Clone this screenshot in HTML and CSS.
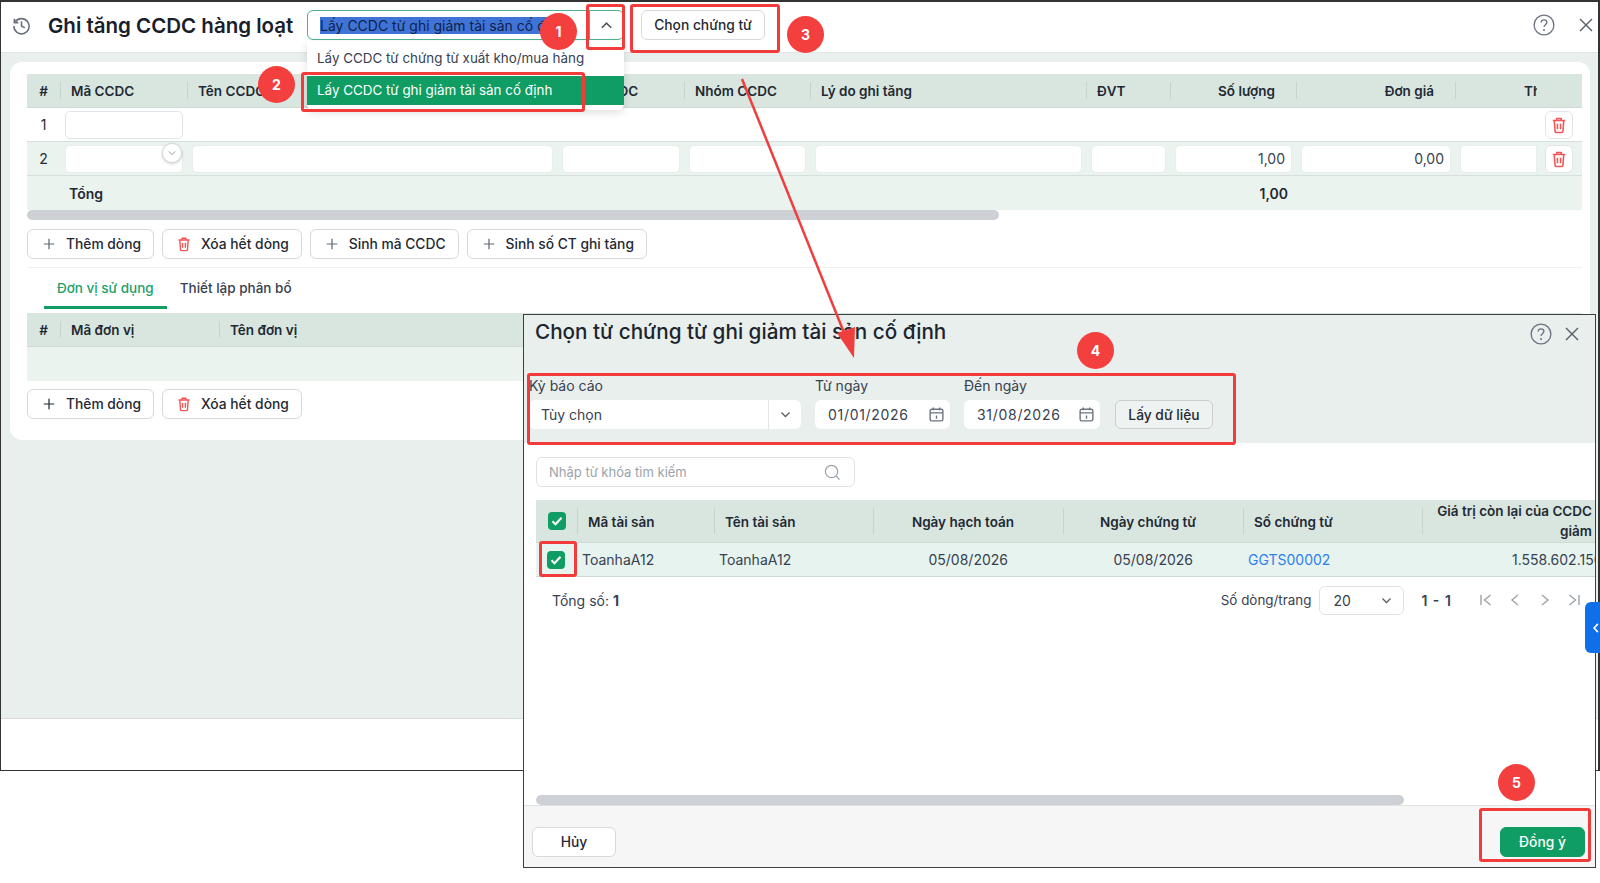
FILE: index.html
```html
<!DOCTYPE html>
<html lang="vi">
<head>
    <meta charset="UTF-8">
    <meta name="viewport" content="width=device-width, initial-scale=1.0">
    <title>Ghi tăng CCDC hàng loạt</title>
    <link rel="stylesheet" href="styles.css">
</head>
<body>

<svg class="icon-defs" width="0" height="0">
    <symbol id="i-plus" viewBox="0 0 16 16"><path d="M8 2v12M2 8h12" fill="none" stroke="currentColor" stroke-width="1.4"/></symbol>
    <symbol id="i-trash" viewBox="0 0 16 16"><path d="M2.5 4h11M6 4V2.2h4V4M3.8 4l.7 9.6c0 .6.5 1 1 1h5c.5 0 1-.4 1-1l.7-9.6M6.6 6.8v5M9.4 6.8v5" fill="none" stroke="currentColor" stroke-width="1.4" stroke-linejoin="round"/></symbol>
    <symbol id="i-cal" viewBox="0 0 16 16"><path d="M3.5 3h9c.8 0 1.5.7 1.5 1.5v8c0 .8-.7 1.5-1.5 1.5h-9C2.700 14 2 13.300 2 12.500v-8C2 3.700 2.700 3 3.500 3zM2 6.500h12M5 1.500V4M11 1.500V4M8 9v3" fill="none" stroke="currentColor" stroke-width="1.300"/></symbol>
    <symbol id="i-down" viewBox="0 0 16 16"><path d="M3 5.500l5 5 5-5" fill="none" stroke="currentColor" stroke-width="1.500"/></symbol>
    <symbol id="i-help" viewBox="0 0 20 20"><circle cx="10" cy="10" r="9" fill="none" stroke="currentColor" stroke-width="1.200"/><path d="M7.400 7.800c0-1.500 1.100-2.500 2.600-2.500s2.600 1 2.600 2.300c0 2-2.600 2.200-2.600 4.200" fill="none" stroke="currentColor" stroke-width="1.200"/><circle cx="10" cy="14.600" r=".9" fill="currentColor"/></symbol>
    <symbol id="i-close" viewBox="0 0 14 14"><path d="M1 1l12 12M13 1L1 13" fill="none" stroke="currentColor" stroke-width="1.400"/></symbol>
    <symbol id="i-check" viewBox="0 0 18 18"><rect width="18" height="18" rx="4" fill="#0f9d63"/><path d="M4.500 9.300l3 3 6-6.500" fill="none" stroke="#fff" stroke-width="2"/></symbol>
</svg>

<div class="window">
    <div class="top-bar">
        <svg class="history-icon" viewBox="0 0 20 20"><path d="M3.200 6.500A8 8 0 1 1 2 10.500M2.500 2.800v4.200h4.200M10 5.500V10.500l3.500 2" fill="none" stroke="currentColor" stroke-width="1.700"/></svg>
        <h1 class="page-title">Ghi tăng CCDC hàng loạt</h1>
        <div class="source-select">
            <div class="source-value"><span class="selected-text">Lấy CCDC từ ghi giảm tài sản cố định</span></div>
            <div class="source-arrow"><svg class="chev-up" viewBox="0 0 16 16"><path d="M3 10.500l5-5 5 5" fill="none" stroke="currentColor" stroke-width="1.600"/></svg></div>
        </div>
        <button class="btn btn-pick">Chọn chứng từ</button>
        <div class="top-actions">
            <svg class="help-icon"><use href="#i-help"/></svg>
            <svg class="close-icon"><use href="#i-close"/></svg>
        </div>
    </div>

    <div class="content">
        <div class="card">
            <div class="grid main-grid grid-head">
                <div class="th">#</div>
                <div class="th">Mã CCDC</div>
                <div class="th">Tên CCDC</div>
                <div class="th">Loại CCDC</div>
                <div class="th">Nhóm CCDC</div>
                <div class="th">Lý do ghi tăng</div>
                <div class="th">ĐVT</div>
                <div class="th th-right">Số lượng</div>
                <div class="th th-right">Đơn giá</div>
                <div class="th th-clip">Thành tiền</div>
                <div class="th th-kebab"></div>
            </div>
            <div class="grid main-grid row">
                <div class="td td-no">1</div>
                <div class="td"><div class="input"></div></div>
                <div class="td"></div><div class="td"></div><div class="td"></div><div class="td"></div>
                <div class="td"></div><div class="td"></div><div class="td"></div><div class="td"></div>
                <div class="td td-del"><div class="del-btn"><svg class="trash"><use href="#i-trash"/></svg></div></div>
            </div>
            <div class="grid main-grid row row-alt">
                <div class="td td-no">2</div>
                <div class="td"><div class="input input-plain"></div></div>
                <div class="td"><div class="input input-plain"></div></div>
                <div class="td"><div class="input input-plain"></div></div>
                <div class="td"><div class="input input-plain"></div></div>
                <div class="td"><div class="input input-plain"></div></div>
                <div class="td"><div class="input input-plain"></div></div>
                <div class="td"><div class="input input-plain input-num">1,00</div></div>
                <div class="td"><div class="input input-plain input-num">0,00</div></div>
                <div class="td"><div class="input input-plain input-cut"></div></div>
                <div class="td td-del"><div class="del-btn"><svg class="trash"><use href="#i-trash"/></svg></div></div>
            </div>
            <div class="grid main-grid row-total">
                <div></div>
                <div class="total-label">Tổng</div>
                <div></div><div></div><div></div><div></div><div></div>
                <div class="total-num">1,00</div>
            </div>
            <div class="scroll-track"><div class="scroll-thumb"></div></div>

            <div class="btn-row">
                <button class="btn btn-tool"><svg class="ico ico-muted"><use href="#i-plus"/></svg>Thêm dòng</button>
                <button class="btn btn-tool"><svg class="ico ico-red"><use href="#i-trash"/></svg>Xóa hết dòng</button>
                <button class="btn btn-tool"><svg class="ico ico-muted"><use href="#i-plus"/></svg>Sinh mã CCDC</button>
                <button class="btn btn-tool"><svg class="ico ico-muted"><use href="#i-plus"/></svg>Sinh số CT ghi tăng</button>
            </div>

            <div class="tabs">
                <div class="tab tab-active">Đơn vị sử dụng</div>
                <div class="tab">Thiết lập phân bổ</div>
            </div>
            <div class="grid unit-grid grid-head">
                <div class="th">#</div>
                <div class="th">Mã đơn vị</div>
                <div class="th">Tên đơn vị</div>
            </div>
            <div class="unit-empty"></div>
            <div class="btn-row btn-row-sub">
                <button class="btn btn-tool"><svg class="ico"><use href="#i-plus"/></svg>Thêm dòng</button>
                <button class="btn btn-tool"><svg class="ico ico-red"><use href="#i-trash"/></svg>Xóa hết dòng</button>
            </div>
        </div>
    </div>
    <div class="window-foot"></div>
</div>

<!-- dropdown mo ra tu o chon nguon -->
<div class="source-menu">
    <div class="menu-item">Lấy CCDC từ chứng từ xuất kho/mua hàng</div>
    <div class="menu-item menu-item-on">Lấy CCDC từ ghi giảm tài sản cố định</div>
</div>
<div class="cell-chevron"><svg class="ico-tiny"><use href="#i-down"/></svg></div>

<div class="modal">
    <div class="modal-head">
        <div class="modal-title-row">
            <h2 class="modal-title">Chọn từ chứng từ ghi giảm tài sản cố định</h2>
            <div class="modal-actions">
                <svg class="help-icon"><use href="#i-help"/></svg>
                <svg class="close-icon"><use href="#i-close"/></svg>
            </div>
        </div>
        <div class="filter-row">
            <div class="field field-period">
                <label>Kỳ báo cáo</label>
                <div class="control control-select"><span>Tùy chọn</span><div class="select-arrow"><svg class="ico-small"><use href="#i-down"/></svg></div></div>
            </div>
            <div class="field field-from">
                <label>Từ ngày</label>
                <div class="control control-date"><span>01/01/2026</span><svg class="cal"><use href="#i-cal"/></svg></div>
            </div>
            <div class="field field-to">
                <label>Đến ngày</label>
                <div class="control control-date"><span>31/08/2026</span><svg class="cal"><use href="#i-cal"/></svg></div>
            </div>
            <button class="btn btn-fetch">Lấy dữ liệu</button>
        </div>
    </div>

    <div class="modal-body">
        <div class="search-box">
            <span>Nhập từ khóa tìm kiếm</span>
            <svg class="search-icon" viewBox="0 0 18 18"><circle cx="8" cy="8" r="6.500" fill="none" stroke="currentColor" stroke-width="1.300"/><path d="M13 13l3.500 3.500" fill="none" stroke="currentColor" stroke-width="1.300"/></svg>
        </div>
        <div class="grid voucher-grid grid-head voucher-head">
            <div class="th th-check"><svg class="check"><use href="#i-check"/></svg></div>
            <div class="th">Mã tài sản</div>
            <div class="th">Tên tài sản</div>
            <div class="th th-date1">Ngày hạch toán</div>
            <div class="th th-date2">Ngày chứng từ</div>
            <div class="th">Số chứng từ</div>
            <div class="th th-value">Giá trị còn lại của CCDC giảm</div>
        </div>
        <div class="grid voucher-grid voucher-row">
            <div class="vd vd-check"><svg class="check"><use href="#i-check"/></svg></div>
            <div class="vd">ToanhaA12</div>
            <div class="vd">ToanhaA12</div>
            <div class="vd vd-date1">05/08/2026</div>
            <div class="vd vd-date2">05/08/2026</div>
            <div class="vd vd-link">GGTS00002</div>
            <div class="vd vd-value">1.558.602.150</div>
        </div>
        <div class="pager">
            <div class="pager-total">Tổng số: <b>1</b></div>
            <div class="pager-right">
                <span class="page-label">Số dòng/trang</span>
                <div class="page-size"><span>20</span><svg class="ico-small"><use href="#i-down"/></svg></div>
                <b class="page-range">1 - 1</b>
                <svg class="nav-icon" viewBox="0 0 14 14"><path d="M2 2v10M11.500 2l-6 5 6 5" fill="none" stroke="currentColor" stroke-width="1.400"/></svg>
                <svg class="nav-icon" viewBox="0 0 14 14"><path d="M10 2L4 7l6 5" fill="none" stroke="currentColor" stroke-width="1.400"/></svg>
                <svg class="nav-icon" viewBox="0 0 14 14"><path d="M4 2l6 5-6 5" fill="none" stroke="currentColor" stroke-width="1.400"/></svg>
                <svg class="nav-icon" viewBox="0 0 14 14"><path d="M12 2v10M2.500 2l6 5-6 5" fill="none" stroke="currentColor" stroke-width="1.400"/></svg>
            </div>
        </div>
        <div class="modal-scroll"><div class="modal-scroll-thumb"></div></div>
    </div>

    <div class="modal-foot">
        <button class="btn btn-cancel">Hủy</button>
        <button class="btn btn-ok">Đồng ý</button>
    </div>
</div>

<div class="side-tab"><svg class="side-chev" viewBox="0 0 8 14"><path d="M6.500 1.500L1.500 7l5 5.500" fill="none" stroke="currentColor" stroke-width="2.200"/></svg></div>

<!-- chu thich mau do ve len anh -->
<svg class="arrow-layer" viewBox="0 0 1600 883">
    <path d="M742 79L849 345" fill="none" stroke="#ef3e3e" stroke-width="2.500"/>
    <path d="M854 358L837 333L855 327Z" fill="#ef3e3e"/>
</svg>
<div class="mark mark-1"></div>
<div class="mark mark-2"></div>
<div class="mark mark-3"></div>
<div class="mark mark-4"></div>
<div class="mark mark-check"></div>
<div class="mark mark-5"></div>
<div class="badge badge-1">1</div>
<div class="badge badge-2">2</div>
<div class="badge badge-3">3</div>
<div class="badge badge-4">4</div>
<div class="badge badge-5">5</div>

</body>
</html>
```

FILE: styles.css
```css
* {
    box-sizing: border-box;
}
body {
    margin: 0;
    height: 883px;
    overflow: hidden;
    position: relative;
    background-color: #fff;
    color: #1f2933;
    font-family: Inter, "Noto Sans", sans-serif;
    font-size: 14px;
}
h1, h2 {
    margin: 0;
}
button {
    font-family: inherit;
}
.icon-defs {
    position: absolute;
}

/* cua so phia sau */
.window {
    height: 771px;
    display: flex;
    flex-direction: column;
    border: 1px solid #333;
    border-top-width: 2px;
    border-right-width: 2px;
    background-color: #e9efec;
}
.top-bar {
    height: 51px;
    flex: none;
    display: flex;
    align-items: center;
    padding: 0 5px 4px 11px;
    background-color: #fff;
    border-bottom: 1px solid #dfe6e3;
}
.history-icon {
    width: 19px;
    height: 19px;
    color: #6b7280;
    flex: none;
}
.page-title {
    margin-left: 17px;
    width: 259px;
    flex: none;
    font-size: 20.5px;
    font-weight: 600;
    white-space: nowrap;
    color: #17202b;
}
.source-select {
    width: 317px;
    height: 30px;
    display: flex;
    border: 1px solid #4db38f;
    border-radius: 6px;
    overflow: hidden;
}
.source-value {
    flex: 1;
    padding-left: 12px;
    line-height: 29px;
    font-size: 14px;
    white-space: nowrap;
    overflow: hidden;
}
.selected-text {
    background-color: #3f74d6;
    color: #10214a;
}
.source-arrow {
    width: 34px;
    display: flex;
    align-items: center;
    justify-content: center;
    border-left: 1px solid #4db38f;
    color: #555;
}
.chev-up {
    width: 15px;
    height: 15px;
}
.btn {
    display: inline-flex;
    align-items: center;
    justify-content: center;
    height: 30px;
    padding: 0;
    border: 1px solid #d6dadd;
    border-radius: 6px;
    background-color: #fff;
    color: #1f2933;
    font-size: 13.8px;
    font-weight: 500;
    white-space: nowrap;
}
.btn-pick {
    margin-left: 17px;
    width: 124px;
}
.top-actions {
    margin-left: auto;
    display: flex;
    align-items: center;
    gap: 24px;
}
.help-icon {
    width: 22px;
    height: 22px;
    color: #6b7280;
}
.close-icon {
    width: 14px;
    height: 14px;
    color: #555d66;
}
.content {
    flex: 1;
    padding: 9px 8px 0 9px;
}
.card {
    height: 378px;
    padding: 12px 8px 0 17px;
    background-color: #fff;
    border-radius: 12px;
}
.window-foot {
    height: 52px;
    flex: none;
    background-color: #fff;
    border-top: 1px solid #d5d9dc;
}

/* bang */
.grid {
    display: grid;
}
.main-grid {
    grid-template-columns: 33px 127px 370px 127px 126px 276px 84px 126px 159px 85px 42px;
}
.unit-grid {
    grid-template-columns: 33px 159px 1fr;
}
.voucher-grid {
    grid-template-columns: 41px 137px 159px 190px 180px 179px 173px;
}
.grid-head {
    height: 34px;
    background-color: #d9e6e0;
    border-bottom: 1px solid #cfdad5;
}
.th {
    position: relative;
    display: flex;
    align-items: center;
    padding: 1px 11px 0;
    font-size: 13.5px;
    font-weight: 600;
    color: #1f2933;
    white-space: nowrap;
}
.th + .th::before {
    content: "";
    position: absolute;
    left: 0;
    top: 8px;
    bottom: 8px;
    width: 1px;
    background-color: #c6d2cd;
}
.th:first-child {
    justify-content: center;
    padding: 0;
}
.th-right {
    justify-content: flex-end;
    padding-right: 21px;
}
.th-clip {
    padding: 0 0 0 69px;
    margin-right: 3px;
    overflow: hidden;
}
.th-kebab::before {
    display: none;
}
.row {
    height: 34px;
    border-bottom: 1px solid #d5dfdb;
}
.row-alt {
    background-color: #ebf3ef;
}
.td {
    padding: 3px 4px 3px 5px;
}
.td-no {
    padding: 0;
    line-height: 33px;
    text-align: center;
}
.td-del {
    padding: 3px 9px 3px 5px;
}
.input {
    height: 28px;
    background-color: #fff;
    border: 1px solid #dfe4e6;
    border-radius: 5px;
    line-height: 26px;
}
.input-plain {
    border-color: #e8eeeb;
}
.input-num {
    padding-right: 6px;
    text-align: right;
    color: #374151;
}
.input-cut {
    margin-right: -1px;
    border-radius: 5px 0 0 5px;
}
.del-btn {
    width: 28px;
    height: 28px;
    display: flex;
    align-items: center;
    justify-content: center;
    background-color: #fff;
    border: 1px solid #e3e6e8;
    border-radius: 6px;
}
.trash {
    width: 18px;
    height: 18px;
    color: #f25555;
}
.row-total {
    height: 34px;
    align-items: center;
    background-color: #ebf3ef;
    font-weight: 600;
}
.total-label {
    padding-left: 9px;
}
.total-num {
    padding-right: 8px;
    text-align: right;
}
.scroll-track {
    height: 10px;
}
.scroll-thumb {
    width: 972px;
    height: 10px;
    background-color: #cdd1d6;
    border-radius: 5px;
}
.btn-row {
    display: flex;
    gap: 8px;
    margin-top: 9px;
}
.btn-row-sub {
    margin-top: 8px;
}
.btn-tool {
    padding: 0 12px 0 14px;
    gap: 10px;
}
.ico {
    width: 14px;
    height: 14px;
    color: #1f2933;
}
.ico-muted {
    color: #5f6872;
}
.ico-red {
    width: 16px;
    height: 16px;
    margin: 0 -1px;
    color: #f25555;
}
.tabs {
    display: flex;
    height: 46px;
    margin-top: 8px;
    padding-left: 17px;
    border-top: 1px solid #eef1f0;
}
.tab {
    height: 41px;
    padding: 0 13px;
    line-height: 40px;
    font-size: 13.5px;
    font-weight: 500;
    color: #374151;
}
.tab-active {
    color: #22a06b;
    border-bottom: 3px solid #0f9d63;
}
.unit-empty {
    height: 34px;
    background-color: #ebf3ef;
}

/* dropdown */
.source-menu {
    position: absolute;
    left: 307px;
    top: 41px;
    width: 317px;
    height: 69px;
    background-color: #fff;
    border-radius: 0 0 6px 6px;
    box-shadow: 0 3px 8px rgba(0, 0, 0, 0.12);
}
.menu-item {
    height: 35px;
    padding-left: 10px;
    line-height: 35px;
    font-size: 13.4px;
    color: #374151;
}
.menu-item-on {
    height: 29px;
    line-height: 28px;
    background-color: #0f9d63;
    color: #fff;
}
.cell-chevron {
    position: absolute;
    left: 162px;
    top: 143px;
    width: 20px;
    height: 20px;
    display: flex;
    align-items: center;
    justify-content: center;
    background-color: #fff;
    border: 1px solid #d5d9dc;
    border-radius: 50%;
    color: #8a939b;
    box-shadow: 0 1px 3px rgba(0, 0, 0, 0.2);
}
.ico-tiny {
    width: 10px;
    height: 10px;
}

/* hop thoai */
.modal {
    position: absolute;
    left: 523px;
    top: 314px;
    width: 1073px;
    height: 554px;
    display: flex;
    flex-direction: column;
    background-color: #fff;
    border: 1px solid #3c3f42;
    overflow: hidden;
}
.modal-head {
    height: 128px;
    flex: none;
    padding: 0 0 0 5px;
    background-color: #e9efec;
}
.modal-title-row {
    height: 60px;
    display: flex;
    padding: 4px 16px 0 6px;
}
.modal-title {
    font-size: 20.7px;
    font-weight: 500;
    color: #1c252e;
    white-space: nowrap;
}
.modal-actions {
    margin-left: auto;
    display: flex;
    align-items: center;
    gap: 13px;
    height: 26px;
    margin-top: 2px;
}
.filter-row {
    display: flex;
    align-items: flex-end;
}
.field label {
    display: block;
    margin-bottom: 3px;
    line-height: 22px;
    color: #374151;
    white-space: nowrap;
}
.field-period {
    width: 272px;
}
.field-from {
    width: 135px;
    margin-left: 14px;
}
.field-to {
    width: 136px;
    margin-left: 14px;
}
.control {
    height: 29px;
    display: flex;
    align-items: center;
    background-color: #fff;
    border-radius: 6px;
    color: #374151;
}
.control-select {
    padding-left: 12px;
    justify-content: space-between;
}
.select-arrow {
    width: 33px;
    height: 100%;
    display: flex;
    align-items: center;
    justify-content: center;
    border-left: 1px solid #dfe4e6;
}
.ico-small {
    width: 13px;
    height: 13px;
    color: #555d66;
}
.control-date {
    padding: 0 5px 0 13px;
    justify-content: space-between;
    letter-spacing: 0.7px;
}
.cal {
    width: 17px;
    height: 17px;
    color: #6b7280;
}
.btn-fetch {
    width: 98px;
    height: 29px;
    margin-left: 15px;
    background-color: #eef2f0;
    border-color: #c9cfcc;
}
.modal-body {
    flex: 1;
    min-height: 0;
    display: flex;
    flex-direction: column;
    padding: 14px 0 0 12px;
}
.search-box {
    width: 319px;
    height: 30px;
    flex: none;
    display: flex;
    align-items: center;
    justify-content: space-between;
    padding: 0 13px 0 12px;
    border: 1px solid #dfe3e5;
    border-radius: 6px;
    font-size: 13px;
    color: #9aa3ab;
}
.search-icon {
    width: 17px;
    height: 17px;
    color: #9aa3ab;
}
.voucher-head {
    height: 43px;
    flex: none;
    margin-top: 13px;
}
.th-check {
    padding: 0;
}
.check {
    width: 18px;
    height: 18px;
}
.th-date1 {
    justify-content: flex-end;
    padding-right: 49px;
}
.th-date2 {
    justify-content: flex-end;
    padding-right: 47px;
}
.th-value {
    padding: 0 3px 0 0;
    justify-content: flex-end;
    text-align: right;
    white-space: normal;
    line-height: 20px;
}
.voucher-row {
    height: 34px;
    flex: none;
    align-items: center;
    background-color: #e6f3ee;
    border-bottom: 1px solid #cfdad5;
    color: #374151;
}
.vd {
    padding-left: 5px;
    white-space: nowrap;
    overflow: hidden;
}
.vd-check {
    padding-left: 11px;
    height: 18px;
}
.vd-date1 {
    padding-right: 55px;
    text-align: right;
}
.vd-date2 {
    padding-right: 50px;
    text-align: right;
}
.vd-link {
    color: #2f80ed;
}
.vd-value {
    padding-left: 90px;
}
.pager {
    height: 30px;
    flex: none;
    margin-top: 8px;
    display: flex;
    align-items: center;
    justify-content: space-between;
    padding: 0 14px 0 16px;
    color: #374151;
}
.pager-right {
    display: flex;
    align-items: center;
}
.page-label {
    font-size: 13.4px;
}
.page-size {
    width: 85px;
    height: 29px;
    margin-left: 8px;
    padding: 0 10px 0 13px;
    display: flex;
    align-items: center;
    justify-content: space-between;
    border: 1px solid #dfe3e5;
    border-radius: 6px;
}
.page-range {
    margin: 0 28px 0 17px;
    font-weight: 600;
    word-spacing: 2px;
}
.nav-icon {
    width: 14px;
    height: 14px;
    margin-left: 15.400px;
    color: #9aa3ab;
}
.page-range + .nav-icon {
    margin-left: 0;
}
.modal-scroll {
    margin-top: auto;
    height: 10px;
    flex: none;
}
.modal-scroll-thumb {
    width: 868px;
    height: 10px;
    background-color: #cdd1d6;
    border-radius: 5px;
}
.modal-foot {
    height: 62px;
    flex: none;
    display: flex;
    justify-content: space-between;
    padding: 21px 10px 0 8px;
    background-color: #f6f6f6;
    border-top: 1px solid #dfe2e4;
}
.btn-cancel {
    width: 84px;
}
.btn-ok {
    width: 85px;
    background-color: #0f9d63;
    border-color: #0f9d63;
    color: #fff;
}
.side-tab {
    position: absolute;
    left: 1585px;
    top: 602px;
    width: 15px;
    height: 51px;
    display: flex;
    align-items: center;
    justify-content: flex-end;
    padding-right: 1px;
    background-color: #0f6fe8;
    border-radius: 6px 0 0 6px;
    color: #fff;
}
.side-chev {
    width: 6px;
    height: 12px;
}

/* chu thich */
.arrow-layer {
    position: absolute;
    left: 0;
    top: 0;
    width: 1600px;
    height: 883px;
}
.mark {
    position: absolute;
    border: 3px solid #f23c3c;
    border-radius: 3px;
}
.mark-1 { left: 586px; top: 4px; width: 39px; height: 46px; }
.mark-2 { left: 301px; top: 72px; width: 284px; height: 40px; }
.mark-3 { left: 630px; top: 4px; width: 150px; height: 49px; }
.mark-4 { left: 527px; top: 373px; width: 709px; height: 72px; }
.mark-check { left: 539px; top: 541px; width: 38px; height: 36px; }
.mark-5 { left: 1479px; top: 808px; width: 112px; height: 54px; }
.badge {
    position: absolute;
    width: 37px;
    height: 37px;
    display: flex;
    align-items: center;
    justify-content: center;
    background-color: #f43f3f;
    border-radius: 50%;
    color: #fff;
    font-weight: 700;
    font-size: 14px;
}
.badge-1 { left: 540px; top: 13px; }
.badge-2 { left: 258px; top: 66px; }
.badge-3 { left: 787px; top: 16px; }
.badge-4 { left: 1077px; top: 332px; }
.badge-5 { left: 1498px; top: 764px; }
```
